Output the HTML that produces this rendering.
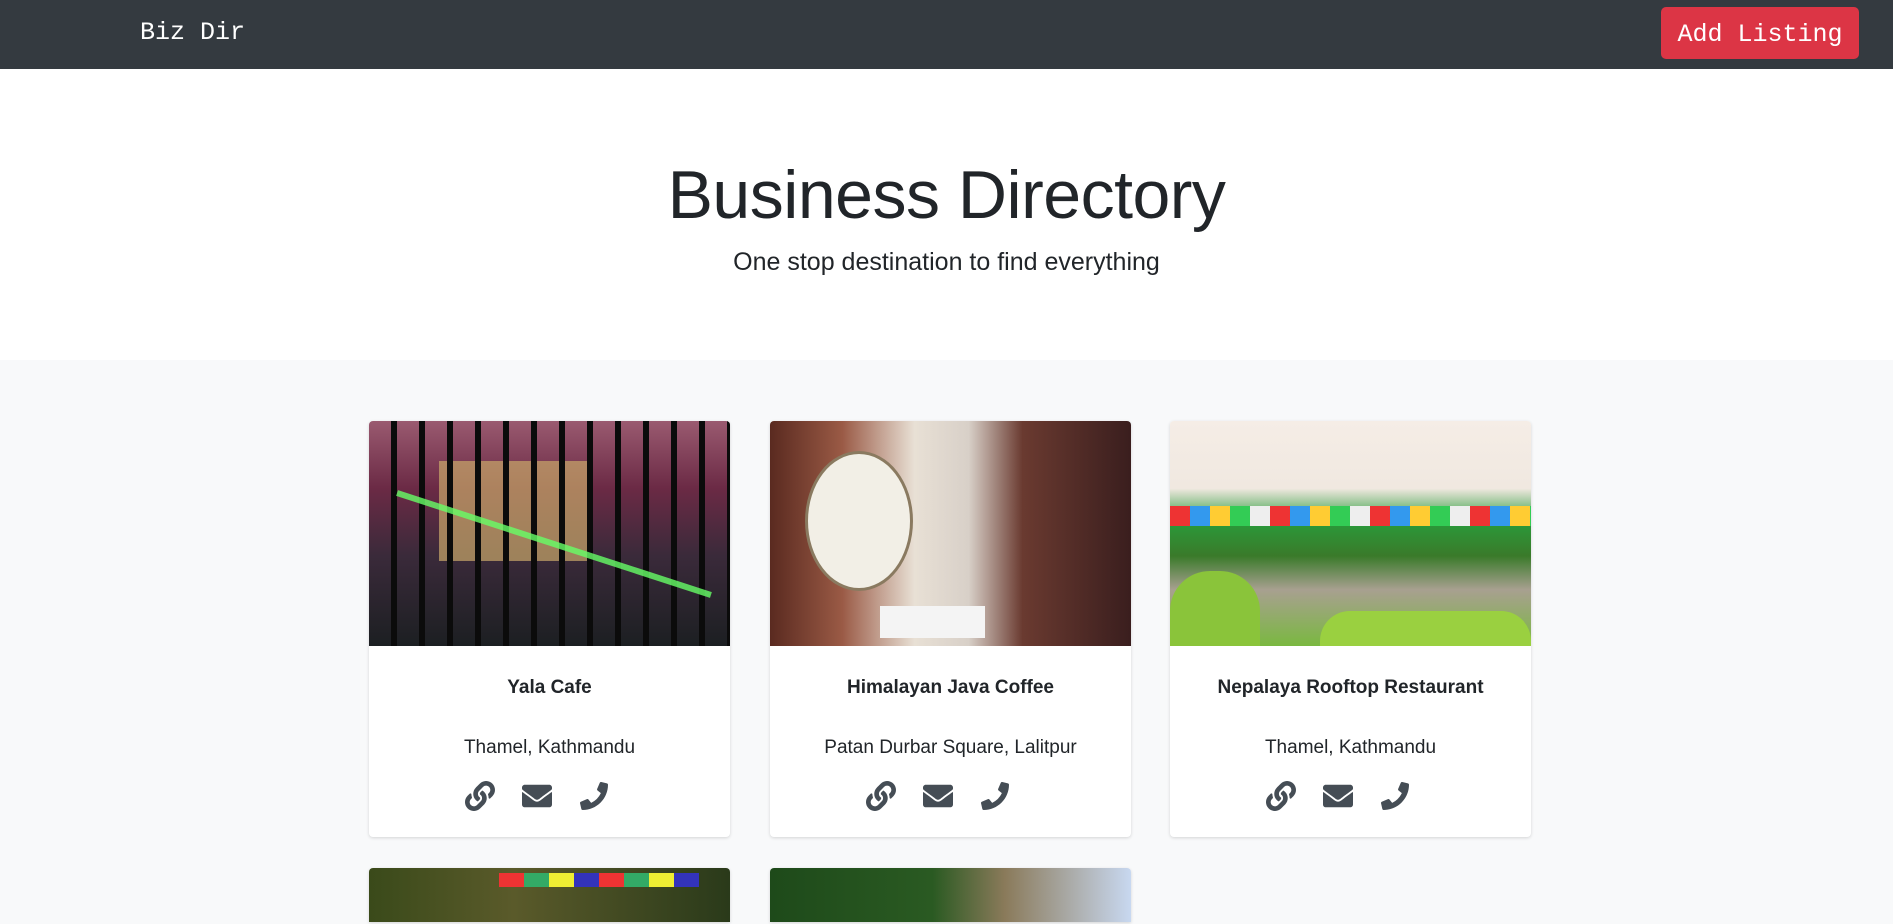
<!DOCTYPE html>
<html><head><meta charset="utf-8">
<style>
*{box-sizing:border-box;margin:0;padding:0}
html,body{width:1893px;height:924px;overflow:hidden}
body{background:#f8f9fa;font-family:"Liberation Sans",sans-serif;color:#212529;position:relative}
.nav{position:absolute;left:0;top:0;width:1893px;height:69px;background:#343a40}
.brand{position:absolute;left:140px;top:18px;color:#fff;font-family:"Liberation Mono",monospace;font-size:25px}
.btn{position:absolute;left:1661px;top:7px;width:198px;height:52px;background:#dc3545;border-radius:5px;color:#fff;font-family:"Liberation Mono",monospace;font-size:25px;text-align:center;line-height:56px}
.hero{position:absolute;left:0;top:69px;width:1893px;height:291px;background:#fff;text-align:center}
.hero h1{position:absolute;left:0;right:0;top:86px;font-weight:300;font-size:68px;line-height:80px;letter-spacing:-0.5px}
.hero p{position:absolute;left:0;right:0;top:178px;font-size:25px;line-height:30px}
.card{position:absolute;width:361px;height:416px;background:#fff;border-radius:4px;box-shadow:0 1px 3px rgba(0,0,0,.15);overflow:hidden;text-align:center}
.img{height:225px;position:relative;overflow:hidden}
.t{position:absolute;left:0;right:0;top:256px;font-weight:bold;font-size:19px}
.a{position:absolute;left:0;right:0;top:316px;font-size:19px}
.ic{position:absolute;top:360px;left:0;right:0;height:30px}
.ic svg{position:absolute;top:0}
</style></head><body>
<div class="nav"><div class="brand">Biz Dir</div><div class="btn">Add Listing</div></div>
<div class="hero"><h1>Business Directory</h1><p>One stop destination to find everything</p></div>

<div class="card" style="left:369px;top:421px">
 <div class="img" style="background:linear-gradient(180deg,#9a5a70 0%,#6b2a45 30%,#3a2a3a 60%,#1c1f22 100%)">
  <div style="position:absolute;left:70px;top:40px;width:150px;height:100px;background:#c9a86a;opacity:.7"></div>
  <div style="position:absolute;left:0;top:0;right:0;bottom:0;background:repeating-linear-gradient(90deg,transparent 0 22px,#0b0b0b 22px 28px)"></div>
  <div style="position:absolute;left:20px;top:120px;width:330px;height:6px;background:#6f6;transform:rotate(18deg);opacity:.8"></div>
 </div>
 <div class="t">Yala Cafe</div><div class="a">Thamel, Kathmandu</div>
 <div class="ic">ICONS</div>
</div>

<div class="card" style="left:770px;top:421px">
 <div class="img" style="background:linear-gradient(90deg,#5a2a20 0%,#9a5a45 20%,#e8e0d5 40%,#d8d0c8 55%,#6a3a30 70%,#3a1e1e 100%)">
  <div style="position:absolute;left:35px;top:30px;width:108px;height:140px;border-radius:50%;background:#f2efe6;border:3px solid #8a7a60"></div>
  <div style="position:absolute;left:110px;top:185px;width:105px;height:32px;background:#f4f4f4"></div>
 </div>
 <div class="t">Himalayan Java Coffee</div><div class="a">Patan Durbar Square, Lalitpur</div>
 <div class="ic">ICONS</div>
</div>

<div class="card" style="left:1170px;top:421px">
 <div class="img" style="background:linear-gradient(180deg,#f5ede6 0%,#f0e8e0 30%,#2a9a3a 45%,#3a7a2a 60%,#a8a090 75%,#7ab840 100%)">
  <div style="position:absolute;left:0;top:85px;width:361px;height:20px;background:repeating-linear-gradient(90deg,#e33 0 20px,#39e 20px 40px,#fc3 40px 60px,#3c5 60px 80px,#eee 80px 100px)"></div>
  <div style="position:absolute;left:0;top:150px;width:90px;height:75px;background:#8ac43a;border-radius:40px 40px 0 0"></div>
  <div style="position:absolute;left:150px;top:190px;width:211px;height:35px;background:#9ad040;border-radius:30px 30px 0 0"></div>
 </div>
 <div class="t">Nepalaya Rooftop Restaurant</div><div class="a">Thamel, Kathmandu</div>
 <div class="ic">ICONS</div>
</div>

<div class="card" style="left:369px;top:868px;height:54px;border-radius:4px 4px 0 0">
 <div class="img" style="background:linear-gradient(90deg,#3a4a1a 0%,#5a5a2a 40%,#2a3a1a 100%)">
  <div style="position:absolute;left:130px;top:5px;width:200px;height:14px;background:repeating-linear-gradient(90deg,#e33 0 25px,#3a6 25px 50px,#ee3 50px 75px,#33b 75px 100px)"></div>
 </div>
</div>
<div class="card" style="left:770px;top:868px;height:54px;border-radius:4px 4px 0 0">
 <div class="img" style="background:linear-gradient(90deg,#1e4a1a 0%,#2a5a22 45%,#8a7a5a 65%,#c8d8f0 100%)"></div>
</div>

<script>
var link='<svg width="30" height="30" viewBox="0 0 512 512" style="left:LPX"><path fill="#454d55" d="M326.6 185.4c59.7 59.8 58.9 155.7.4 214.6-.1.1-.3.2-.4.4l-67.2 67.2c-59.3 59.3-155.7 59.3-215 0-59.3-59.3-59.3-155.7 0-215l37.1-37.1c9.8-9.8 26.8-3.3 27.3 10.6.6 17.7 3.8 35.5 9.7 52.7 2 5.8.6 12.3-3.8 16.6l-13.1 13.1c-28 28-28.9 73.7-1.2 102 28 28.6 74.1 28.7 102.3.5l67.2-67.2c28.2-28.2 28.1-73.8 0-101.8-3.7-3.7-7.4-6.6-10.3-8.6a16 16 0 0 1-6.9-12.6c-.4-10.6 3.3-21.5 11.7-29.8l21.1-21.1c5.5-5.5 14.2-6.2 20.6-1.7 7.3 5.1 14.1 10.9 20.4 17.2zM467.5 44.4c-59.3-59.3-155.7-59.3-215 0l-67.2 67.2-.4.4c-58.6 58.9-59.4 154.8.4 214.6 6.3 6.3 13.1 12.1 20.4 17.2 6.4 4.5 15.1 3.8 20.6-1.7l21.1-21.1c8.4-8.4 12.1-19.2 11.7-29.8a16 16 0 0 0-6.9-12.6c-2.9-2-6.6-4.9-10.3-8.6-28.1-28-28.2-73.6 0-101.8l67.2-67.2c28.2-28.2 74.3-28.1 102.3.5 27.8 28.3 26.9 74-1.2 102l-13.1 13.1c-4.4 4.4-5.8 10.8-3.8 16.6 5.9 17.2 9.1 35 9.7 52.7.5 13.9 17.5 20.4 27.3 10.6l37.1-37.1c59.3-59.3 59.3-155.7 0-215z"/></svg>';
var mail='<svg width="30" height="30" viewBox="0 0 512 512" style="left:MPX"><path fill="#454d55" d="M502.3 190.8c3.9-3.1 9.7-.2 9.7 4.7V400c0 26.5-21.5 48-48 48H48c-26.5 0-48-21.5-48-48V195.6c0-5 5.7-7.8 9.7-4.7 22.4 17.4 52.1 39.5 154.1 113.6 21.1 15.4 56.7 47.8 92.2 47.6 35.7.3 72-32.8 92.3-47.6 102-74.1 131.6-96.3 154-113.7zM256 320c23.2.4 56.6-29.2 73.4-41.4 132.7-96.3 142.8-104.7 173.4-128.7 5.8-4.5 9.2-11.5 9.2-18.9v-19c0-26.5-21.5-48-48-48H48C21.5 64 0 85.5 0 112v19c0 7.4 3.4 14.3 9.2 18.9 30.6 23.900 40.7 32.4 173.4 128.7 16.8 12.2 50.2 41.8 73.4 41.4z"/></svg>';
var ph='<svg width="28" height="28" viewBox="0 0 512 512" style="left:PPX;top:1px"><path fill="#454d55" d="M497.4 361.8l-112-48a24 24 0 0 0-28 6.9l-49.6 60.6A370.7 370.7 0 0 1 130.6 204.1l60.6-49.6a23.9 23.9 0 0 0 6.9-28l-48-112A24.2 24.2 0 0 0 122.6.6l-104 24A24 24 0 0 0 0 48c0 256.5 207.9 464 464 464a24 24 0 0 0 23.4-18.6l24-104a24.3 24.3 0 0 0-14-27.6z" transform="translate(512 0) scale(-1 1)"/></svg>';
document.querySelectorAll('.ic').forEach(function(e){e.innerHTML=link.replace('LPX','96px')+mail.replace('MPX','153px')+ph.replace('PPX','211px');});
</script>
</body></html>
